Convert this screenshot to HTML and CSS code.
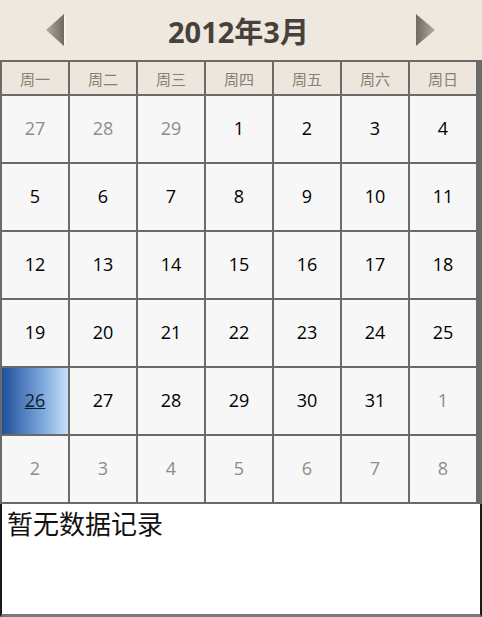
FILE: index.html
```html
<!DOCTYPE html>
<html lang="zh">
<head>
<meta charset="utf-8">
<title>日历</title>
<link rel="stylesheet" href="styles.css">
</head>
<body>
<div class="page">
  <header class="top">
    <svg class="arrow" width="20" height="32" viewBox="0 0 20 32">
      <defs>
        <linearGradient id="gl" x1="0" y1="0" x2="1" y2="0">
          <stop offset="0" stop-color="#b3ab9d"/>
          <stop offset="1" stop-color="#6f695f"/>
        </linearGradient>
      </defs>
      <polygon points="18,0 18,32 0,16" fill="url(#gl)"/>
      <line x1="19" y1="1" x2="19" y2="31" stroke="#fbf8f3" stroke-width="1.5"/>
    </svg>
    <div class="title">2012年3月</div>
    <svg class="arrow" width="20" height="32" viewBox="0 0 20 32">
      <defs>
        <linearGradient id="gr" x1="0" y1="0" x2="1" y2="0">
          <stop offset="0" stop-color="#6f695f"/>
          <stop offset="1" stop-color="#b3ab9d"/>
        </linearGradient>
      </defs>
      <polygon points="1,0 1,32 20,16" fill="url(#gr)"/>
    </svg>
  </header>
  <div class="cal">
    <div class="grid">
      <div class="wd">周一</div><div class="wd">周二</div><div class="wd">周三</div><div class="wd">周四</div><div class="wd">周五</div><div class="wd">周六</div><div class="wd">周日</div>
      <div class="d other">27</div><div class="d other">28</div><div class="d other">29</div><div class="d">1</div><div class="d">2</div><div class="d">3</div><div class="d">4</div>
      <div class="d">5</div><div class="d">6</div><div class="d">7</div><div class="d">8</div><div class="d">9</div><div class="d">10</div><div class="d">11</div>
      <div class="d">12</div><div class="d">13</div><div class="d">14</div><div class="d">15</div><div class="d">16</div><div class="d">17</div><div class="d">18</div>
      <div class="d">19</div><div class="d">20</div><div class="d">21</div><div class="d">22</div><div class="d">23</div><div class="d">24</div><div class="d">25</div>
      <div class="d sel"><span>26</span></div><div class="d">27</div><div class="d">28</div><div class="d">29</div><div class="d">30</div><div class="d">31</div><div class="d other">1</div>
      <div class="d other">2</div><div class="d other">3</div><div class="d other">4</div><div class="d other">5</div><div class="d other">6</div><div class="d other">7</div><div class="d other">8</div>
    </div>
    <div class="bar"></div>
  </div>
  <div class="empty">暂无数据记录</div>
</div>
</body>
</html>
```
FILE: styles.css
```css
html, body {
  margin: 0;
  padding: 0;
  background: #ffffff;
}
.page {
  width: 482px;
  height: 617px;
  display: flex;
  flex-direction: column;
  font-family: "Open Sans", "Noto Sans CJK SC", sans-serif;
}
.top {
  height: 60px;
  background: #eee8df;
  display: flex;
  align-items: center;
  padding: 0 47px 0 46px;
  box-sizing: border-box;
}
.arrow {
  display: block;
  flex: none;
}
.title {
  flex: 1;
  text-align: center;
  font-size: 29px;
  font-weight: 700;
  color: #46423b;
  padding-right: 4px;
}
.cal {
  display: flex;
  background: #6a6a6a;
}
.grid {
  display: grid;
  grid-template-columns: repeat(7, 66px);
  grid-template-rows: 32px repeat(6, 66px);
  gap: 2px;
  padding: 2px 0 2px 2px;
  background: #6a6a6a;
}
.bar {
  width: 6px;
  background: #6a6a6a;
}
.wd {
  background: #ede6dc;
  color: #858079;
  font-size: 15px;
  display: flex;
  align-items: center;
  justify-content: center;
}
.d {
  background: #f7f7f7;
  color: #000000;
  font-size: 18px;
  font-weight: 500;
  display: flex;
  align-items: center;
  justify-content: center;
  padding-bottom: 3px;
}
.d.other {
  color: #8c8c8c;
}
.d.sel {
  background: linear-gradient(to right, #1f4f98, #7aa6dc 60%, #c7e0fa);
  color: #0d1a30;
}
.d.sel span {
  text-decoration: underline;
}
.empty {
  flex: 1;
  border-left: 2px solid #1a1a1a;
  border-right: 2px solid #1a1a1a;
  border-bottom: 3px solid #7a7a72;
  font-family: "Noto Sans CJK SC", sans-serif;
  font-size: 26px;
  color: #111111;
  padding: 1px 0 0 5px;
  line-height: 36px;
}
```
